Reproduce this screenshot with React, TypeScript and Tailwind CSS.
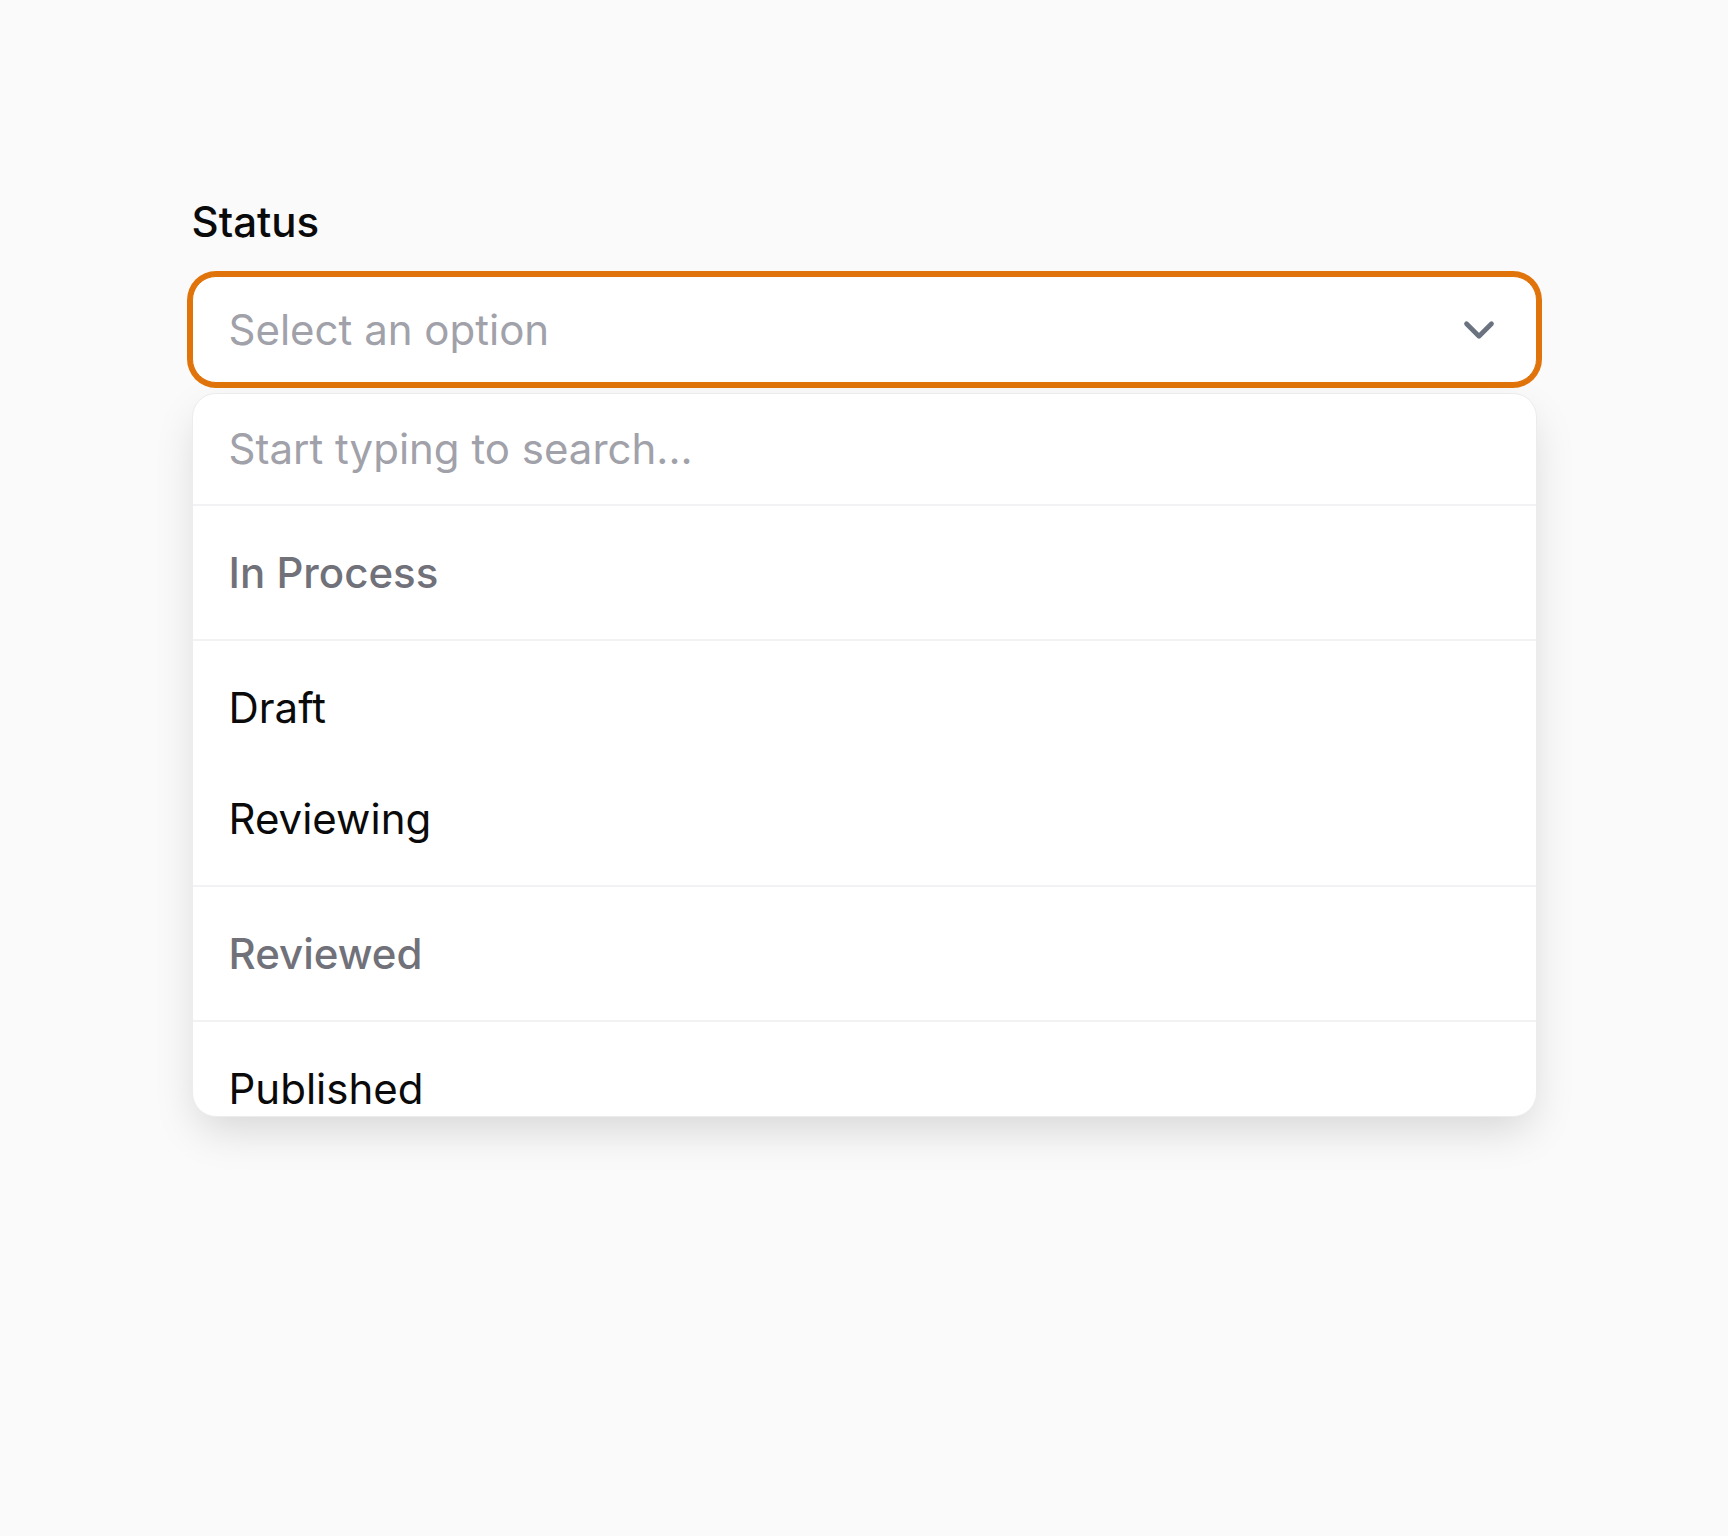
import React, { useState } from "react";
import { ChevronDown } from "lucide-react";

type Group = {
  label: string;
  options: string[];
};

const groups: Group[] = [
  { label: "In Process", options: ["Draft", "Reviewing"] },
  { label: "Reviewed", options: ["Published"] },
];

export default function App() {
  const [query, setQuery] = useState("");

  return (
    <div
      className="min-h-screen bg-[#fafafa] pt-[197px]"
      style={{ fontFamily: "Inter, 'Noto Sans', sans-serif" }}
    >
      <div className="mx-auto w-[1345px]">
        <label className="block text-[42px] leading-[50px] font-medium text-[#0a0a0a]">
          Status
        </label>

        <button
          type="button"
          className="mt-[29px] flex h-[107px] w-full items-center justify-between rounded-[24px] border border-[#e0740b] bg-white pl-[36px] pr-[32px] ring-[5px] ring-[#e0740b]"
        >
          <span className="text-[42px] leading-[50px] text-[#a1a1aa]">
            Select an option
          </span>
          <ChevronDown size={50} strokeWidth={2.25} className="text-[#6b7280]" />
        </button>

        {/* dropdown */}
        <div className="mt-[10px] h-[724px] overflow-hidden rounded-[24px] border border-[#ececef] bg-white shadow-[0_18px_44px_-6px_rgba(0,0,0,0.15)]">
          <div className="flex h-[112px] items-center border-b-2 border-[#f2f2f4] px-[36px]">
            <input
              value={query}
              onChange={(e) => setQuery(e.target.value)}
              placeholder="Start typing to search..."
              className="w-full bg-transparent text-[42px] leading-[50px] text-[#0a0a0a] outline-none placeholder:text-[#a1a1aa]"
            />
          </div>

          {groups.map((group) => (
            <div key={group.label}>
              <div className="flex h-[135px] items-center border-b-2 border-[#f2f2f4] px-[36px] text-[42px] leading-[50px] font-medium text-[#71717a]">
                {group.label}
              </div>
              <div className="border-b-2 border-[#f2f2f4] py-[11px]">
                {group.options.map((opt) => (
                  <div
                    key={opt}
                    className="flex h-[111px] items-center px-[36px] text-[42px] leading-[50px] text-[#0a0a0a]"
                  >
                    {opt}
                  </div>
                ))}
              </div>
            </div>
          ))}
        </div>
      </div>
    </div>
  );
}
